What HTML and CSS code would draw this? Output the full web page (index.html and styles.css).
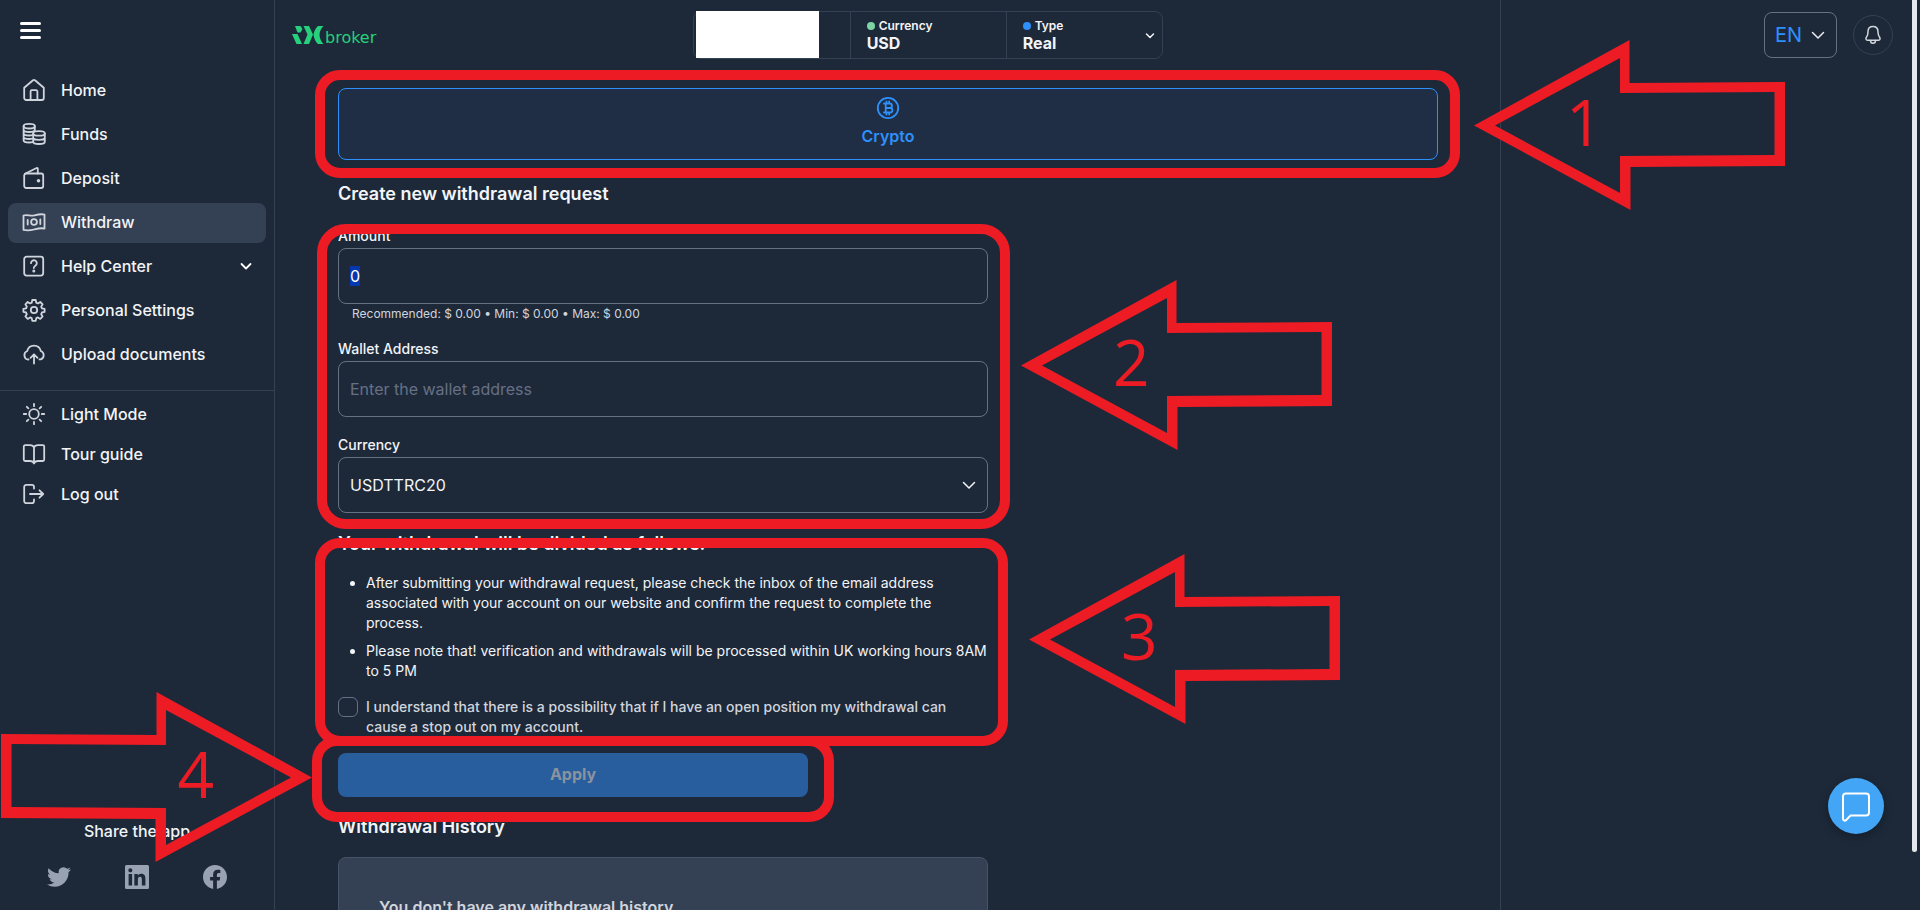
FILE: index.html
```html
<!DOCTYPE html>
<html lang="en">

<head>
    <meta charset="UTF-8">
    <meta name="viewport" content="width=device-width, initial-scale=1.0">
    <title>Withdraw</title>
    <link rel="stylesheet" href="styles.css">
</head>

<body>
    <div class="app">
        <aside class="sidebar">
            <button class="menu-toggle" type="button" aria-label="Toggle menu">
                <span></span><span></span><span></span>
            </button>

            <nav class="menu">
                <a class="menu-item" href="#">
                    <svg class="icon" viewBox="0 0 24 24"><path d="M2.2 9.8 11 2.3a1.5 1.5 0 0 1 2 0l8.8 7.5V20a2 2 0 0 1-2 2H4.2a2 2 0 0 1-2-2z"/><path d="M8.6 22v-8.6a1.2 1.2 0 0 1 1.2-1.2h4.4a1.2 1.2 0 0 1 1.2 1.2V22"/></svg>
                    Home
                </a>
                <a class="menu-item" href="#">
                    <svg class="icon" viewBox="0 0 24 24"><ellipse cx="7.2" cy="4.2" rx="5.6" ry="2.3"/><path d="M1.600 4.200v14c0 1.300 2.500 2.300 5.600 2.300 1.200 0 2.300-.1 3.200-.4M12.800 4.200v5M1.600 7.700c0 1.300 2.500 2.300 5.600 2.300s5.600-1 5.600-2.300M1.600 11.200c0 1.300 2.500 2.300 5.600 2.300 1.200 0 2.200-.1 3.200-.4M1.600 14.700c0 1.300 2.500 2.300 5.600 2.300 1.200 0 2.200-.1 3.200-.4"/><ellipse cx="17" cy="11.400" rx="5.800" ry="2.300"/><path d="M11.200 11.400v8.300c0 1.300 2.600 2.300 5.800 2.300s5.800-1 5.800-2.300v-8.300M11.200 15.500c0 1.300 2.600 2.300 5.800 2.300s5.800-1 5.800-2.300"/></svg>
                    Funds
                </a>
                <a class="menu-item" href="#">
                    <svg class="icon" viewBox="0 0 24 24"><rect x="2.200" y="7.500" width="19" height="14.500" rx="2"/><path d="M3 7.800 14.600 2a.8.800 0 0 1 1.200.7v4.800"/><circle cx="16.500" cy="14.700" r=".9" fill="currentColor"/></svg>
                    Deposit
                </a>
                <a class="menu-item active" href="#">
                    <svg class="icon" viewBox="0 0 24 24"><path d="M1.500 5.500c3.500-1.300 7 .9 10.500 0s7-1.900 10.500-.9v14c-3.500-1-7 0-10.500.9s-7 1.200-10.500.4z"/><circle cx="12" cy="12" r="2.900"/><path d="M5.700 10v4.500M18.300 9.500V14"/></svg>
                    Withdraw
                </a>
                <a class="menu-item" href="#">
                    <svg class="icon" viewBox="0 0 24 24"><rect x="2.200" y="2.600" width="19" height="19" rx="2.500"/><path d="M9 9.200a2.900 2.900 0 1 1 4.600 2.300c-1 .7-1.800 1.100-1.800 2.500"/><circle cx="11.800" cy="17" r=".6" fill="currentColor"/></svg>
                    Help Center
                    <svg class="icon icon-arrow" viewBox="0 0 16 16"><path d="m3.500 6 4.500 4.500L12.500 6"/></svg>
                </a>
                <a class="menu-item" href="#">
                    <svg class="icon" viewBox="0 0 24 24"><circle cx="12" cy="12" r="3.200"/><path d="M10.300 2h3.400l.6 2.700 1.600.7 2.400-1.500 2.300 2.400-1.400 2.300.7 1.700 2.700.6v3l-2.700.6-.7 1.700 1.400 2.300-2.300 2.400-2.400-1.500-1.600.7-.6 2.700h-3.400l-.6-2.700-1.600-.7-2.400 1.500-2.300-2.400 1.400-2.300-.7-1.700-2.700-.6v-3l2.700-.6.7-1.700-1.400-2.300 2.300-2.400 2.400 1.500 1.600-.7z"/></svg>
                    Personal Settings
                </a>
                <a class="menu-item" href="#">
                    <svg class="icon" viewBox="0 0 24 24"><path d="M6.500 17.500H5.700A4.500 4.500 0 0 1 5.200 9 7 7 0 0 1 18.800 9a4.500 4.500 0 0 1 0 8.400h-1.300"/><path d="M12 21.500v-9M8.500 15.800l3.500-3.500 3.500 3.500"/></svg>
                    Upload documents
                </a>
            </nav>

            <nav class="menu menu-secondary">
                <a class="menu-item" href="#">
                    <svg class="icon" viewBox="0 0 24 24"><circle cx="12" cy="12" r="4.800"/><path d="M12 1.800v2.400M12 19.800v2.400M1.800 12h2.400M19.800 12h2.400M4.800 4.800l1.600 1.600M17.600 17.600l1.600 1.600M4.800 19.200l1.600-1.600M17.600 6.400l1.600-1.600"/></svg>
                    Light Mode
                </a>
                <a class="menu-item" href="#">
                    <svg class="icon" viewBox="0 0 24 24"><path d="M12 5.500C11.400 3.900 10 3.200 8 3.200H3.200a1.400 1.400 0 0 0-1.400 1.400v13a1.400 1.400 0 0 0 1.400 1.400H8c2 0 3.400.6 4 2.500.600-1.900 2-2.500 4-2.500h4.800a1.400 1.400 0 0 0 1.400-1.400v-13a1.400 1.400 0 0 0-1.400-1.400H16c-2 0-3.400.7-4 2.300zM12 5.500v15"/></svg>
                    Tour guide
                </a>
                <a class="menu-item" href="#">
                    <svg class="icon" viewBox="0 0 24 24"><path d="M12 6.500V5a2.200 2.200 0 0 0-2.200-2.200H4.400A2.200 2.200 0 0 0 2.200 5v14a2.200 2.200 0 0 0 2.200 2.200h5.400A2.200 2.200 0 0 0 12 19v-1.500"/><path d="M8 12h13M17.500 8.300l3.700 3.700-3.700 3.700"/></svg>
                    Log out
                </a>
            </nav>

            <div class="share">
                <p class="share-title">Share the app</p>
                <div class="share-links">
                    <a href="#" aria-label="Twitter">
                        <svg viewBox="0 0 24 24"><path d="M23.950 4.570a10 10 0 0 1-2.820.770 4.960 4.960 0 0 0 2.160-2.720c-.950.550-2 .950-3.130 1.180a4.920 4.920 0 0 0-8.380 4.480C7.690 8.100 4.070 6.130 1.640 3.160a4.820 4.820 0 0 0-.670 2.470c0 1.710.870 3.210 2.190 4.100a4.900 4.900 0 0 1-2.230-.620v.060a4.920 4.920 0 0 0 3.950 4.830 5 5 0 0 1-2.210.080 4.940 4.940 0 0 0 4.600 3.420A9.870 9.870 0 0 1 0 19.540a14 14 0 0 0 7.550 2.210c9.050 0 14-7.500 14-13.980 0-.210 0-.420-.020-.630a9.940 9.940 0 0 0 2.460-2.550z"/></svg>
                    </a>
                    <a href="#" aria-label="LinkedIn">
                        <svg viewBox="0 0 24 24"><path fill-rule="evenodd" d="M1.500 0h21A1.500 1.500 0 0 1 24 1.500v21a1.500 1.500 0 0 1-1.500 1.500h-21A1.500 1.500 0 0 1 0 22.500v-21A1.500 1.500 0 0 1 1.500 0zM3.600 9v11.400h3.500V9zM5.350 3.300a2.050 2.050 0 1 0 0 4.100 2.050 2.050 0 0 0 0-4.100zM9.350 9v11.400h3.550v-5.650c0-1.500.3-2.930 2.120-2.930 1.810 0 1.840 1.700 1.840 3.030v5.550h3.550v-6.250c0-3.070-.660-5.430-4.250-5.430-1.720 0-2.880.950-3.350 1.850h-.060V9z"/></svg>
                    </a>
                    <a href="#" aria-label="Facebook">
                        <svg viewBox="0 0 24 24"><path d="M24 12.070C24 5.450 18.630.070 12 .070S0 5.450 0 12.070c0 5.990 4.390 10.960 10.130 11.860v-8.390H7.080v-3.470h3.050V9.430c0-3.010 1.790-4.670 4.530-4.670 1.310 0 2.690.240 2.690.240v2.950h-1.510c-1.490 0-1.960.930-1.960 1.880v2.240h3.330l-.530 3.470h-2.800v8.390C19.610 23.030 24 18.060 24 12.070z"/></svg>
                    </a>
                </div>
            </div>
        </aside>

        <main class="main">
            <header class="topbar">
                <a class="logo" href="#">
                    <svg class="logo-mark" viewBox="0 0 32 18"><path d="M3 0h5.500l2 3-2 3.500h-3zM0 8h5.500L10 18H4.500zM11.500 0H17l4 8.500-4 9.500h-5.500l4-9.500zM31.500 0H26c-2.500 2-4 5.500-4.500 8.800.5 3.700 2 7.200 4.500 9.200h5.500c-2.500-2.500-4-6-4-9.200s1.500-6.300 4-8.800z"/></svg>
                    <span>broker</span>
                </a>
                <div class="account-wrap">
                    <button class="account" type="button" aria-label="Account">
                        <span class="account-cell account-name"></span>
                        <span class="account-cell">
                            <span class="account-label"><i class="dot dot-green"></i>Currency</span>
                            <span class="account-value">USD</span>
                        </span>
                        <span class="account-cell">
                            <span class="account-label"><i class="dot dot-blue"></i>Type</span>
                            <span class="account-value">Real</span>
                            <svg class="icon account-arrow" viewBox="0 0 16 16"><path d="m4.500 6 3.500 3.500L11.500 6"/></svg>
                        </span>
                    </button>
                </div>
            </header>

            <div class="content">
                <button class="method" type="button">
                    <svg class="icon" viewBox="0 0 24 24"><circle cx="12" cy="12" r="10.200"/><path d="M8 7.500h5.700a2.200 2.200 0 0 1 0 4.500H9.700h4.500a2.250 2.250 0 0 1 0 4.500H8M9.700 7.500v9M10.500 5.500v2M13.200 5.500v2M10.500 16.500v2M13.200 16.500v2"/></svg>
                    Crypto
                </button>

                <form class="withdraw-form" id="withdraw-form">
                    <h2>Create new withdrawal request</h2>

                    <div class="field">
                        <label for="amount">Amount</label>
                        <input type="text" id="amount" name="amount" value="0">
                        <p class="field-hint">Recommended: $ 0.00 • Min: $ 0.00 • Max: $ 0.00</p>
                    </div>
                    <div class="field">
                        <label for="wallet">Wallet Address</label>
                        <input type="text" id="wallet" name="wallet" placeholder="Enter the wallet address">
                    </div>
                    <div class="field">
                        <label for="currency">Currency</label>
                        <div class="select-box">
                            <select id="currency" name="currency">
                                <option>USDTTRC20</option>
                            </select>
                            <svg class="icon" viewBox="0 0 16 16"><path d="m2.500 5.500 5.500 5.500 5.500-5.500"/></svg>
                        </div>
                    </div>

                    <h2 class="notes-title">Your withdrawal will be divided as follows:</h2>
                    <ul class="notes">
                        <li>After submitting your withdrawal request, please check the inbox of the email address associated with your account on our website and confirm the request to complete the process.</li>
                        <li>Please note that! verification and withdrawals will be processed within UK working hours 8AM to 5 PM</li>
                    </ul>

                    <div class="agree">
                        <input type="checkbox" id="agree" name="agree">
                        <label for="agree">I understand that there is a possibility that if I have an open position my withdrawal can cause a stop out on my account.</label>
                    </div>

                    <button class="apply" type="submit" disabled>Apply</button>
                </form>

                <section class="history">
                    <h2>Withdrawal History</h2>
                    <div class="history-empty">You don't have any withdrawal history</div>
                </section>
            </div>
        </main>

        <aside class="panel">
            <div class="panel-tools">
                <button class="lang" type="button">
                    EN
                    <svg class="icon" viewBox="0 0 16 16"><path d="m2.500 5.500 5.500 5.500 5.500-5.500"/></svg>
                </button>
                <button class="bell" type="button" aria-label="Notifications">
                    <svg class="icon" viewBox="0 0 20 20"><path d="M10 1.500c-3.300 0-5 2.300-5 5.200 0 2.800-.5 4-1.500 5.300-1 1.400-.7 3.200 1 3.200h11c1.700 0 2-1.800 1-3.200-1-1.300-1.500-2.500-1.500-5.300 0-2.900-1.700-5.200-5-5.200z"/><path d="M7.500 15.500c0 1.800 1 2.800 2.500 2.800s2.500-1 2.500-2.800"/></svg>
                </button>
            </div>
        </aside>

        <div class="scroll-track">
            <div class="scroll-thumb"></div>
        </div>
    </div>

    <button class="chat" type="button" aria-label="Chat">
        <svg viewBox="0 0 32 32"><path d="M6 3.500h20a3 3 0 0 1 3 3v16a3 3 0 0 1-3 3H10.500L6.200 30c-1.100 1.100-3.200.7-3.200-1.200V6.500a3 3 0 0 1 3-3z"/></svg>
    </button>

    <!-- step marks over the form -->
    <div class="mark mark-method"></div>
    <div class="mark mark-fields"></div>
    <div class="mark mark-notes"></div>
    <div class="mark mark-apply"></div>

    <div class="step step-1">
        <svg viewBox="0 0 311 170"><path fill-rule="evenodd" d="M0 85.500 155.500 0v43L311 42v84l-154.500 1v43zM21 85.500 146 153v-37l154.500-1V52L146 53V18z"/></svg>
        <span>1</span>
    </div>
    <div class="step step-2">
        <svg viewBox="0 0 311 170"><path fill-rule="evenodd" d="M0 85.500 155.500 0v43L311 42v84l-154.500 1v43zM21 85.500 146 153v-37l154.500-1V52L146 53V18z"/></svg>
        <span>2</span>
    </div>
    <div class="step step-3">
        <svg viewBox="0 0 311 170"><path fill-rule="evenodd" d="M0 85.500 155.500 0v43L311 42v84l-154.500 1v43zM21 85.500 146 153v-37l154.500-1V52L146 53V18z"/></svg>
        <span>3</span>
    </div>
    <div class="step step-4">
        <svg viewBox="0 0 311 170"><path fill-rule="evenodd" d="M311 85.500 155.500 0v43L0 42v84l154.500 1v43zM290 85.500 165 153v-37l-154.500-1V52L165 53V18z"/></svg>
        <span>4</span>
    </div>

    <script>
        document.getElementById('withdraw-form').addEventListener('submit', function (event) {
            event.preventDefault();
        });

        const amount = document.getElementById('amount');
        amount.focus();
        amount.select();
    </script>
</body>

</html>
```
FILE: styles.css
```css
* {
    box-sizing: border-box;
}

body {
    margin: 0;
    font-family: Inter, "Noto Sans", sans-serif;
    font-size: 16px;
    line-height: 24px;
    color: #f2f4f7;
    background-color: #1d2939;
    overflow: hidden;
}

a {
    color: inherit;
    text-decoration: none;
}

button,
input,
select {
    font: inherit;
    color: inherit;
}

button {
    padding: 0;
    border: none;
    background: none;
    cursor: pointer;
}

h2 {
    margin: 0;
    font-size: 18px;
    font-weight: 600;
    line-height: 28px;
}

.icon {
    width: 24px;
    height: 24px;
    fill: none;
    stroke: currentColor;
    stroke-width: 1.5;
    stroke-linecap: round;
    stroke-linejoin: round;
    flex-shrink: 0;
}

.app {
    display: flex;
    height: 100vh;
    overflow: hidden;
}

/* Sidebar */
.sidebar {
    display: flex;
    flex-direction: column;
    width: 275px;
    flex-shrink: 0;
    padding-bottom: 21px;
    border-right: 1px solid #344054;
}

.menu-toggle {
    display: flex;
    flex-direction: column;
    gap: 4px;
    width: 21px;
    margin: 22px 20px 32px;
}

.menu-toggle span {
    height: 3px;
    border-radius: 2px;
    background-color: #fff;
}

.menu {
    display: flex;
    flex-direction: column;
    gap: 4px;
    padding: 0 8px;
}

.menu-item {
    display: flex;
    align-items: center;
    gap: 15px;
    height: 40px;
    padding: 0 14px 2px;
    border-radius: 8px;
    font-weight: 500;
}

.menu-item .icon {
    color: #d0d5dd;
    stroke-width: 1.8;
}

.menu-item.active {
    background-color: #344054;
}

.menu-item .icon-arrow {
    width: 16px;
    height: 16px;
    margin-left: auto;
    margin-right: -2px;
    color: #fff;
}

.menu-secondary {
    gap: 0;
    margin-top: 15px;
    padding-top: 4px;
    border-top: 1px solid #344054;
}

.share {
    margin-top: auto;
}

.share-title {
    margin: 0 0 22px;
    text-align: center;
    font-weight: 500;
}

.share-links {
    display: flex;
    justify-content: space-between;
    padding: 0 47px;
}

.share-links a {
    height: 24px;
}

.share-links svg {
    width: 24px;
    height: 24px;
    fill: #98a2b3;
}

/* Main column */
.main {
    flex: 1;
    min-width: 0;
    border-right: 1px solid #344054;
}

.topbar {
    display: flex;
    align-items: center;
    padding: 11px 21px 0 17px;
}

.logo {
    display: flex;
    align-items: flex-end;
    gap: 1px;
    font-family: "DejaVu Sans", sans-serif;
    line-height: 12px;
    color: #26d07c;
}

.logo-mark {
    width: 32px;
    height: 18px;
    fill: #26d07c;
}

.account-wrap {
    display: flex;
    flex: 1;
    justify-content: center;
}

.account {
    display: grid;
    grid-template-columns: repeat(3, 1fr);
    width: 470px;
    height: 48px;
    border: 1px solid #344054;
    border-radius: 8px;
    text-align: left;
}

.account-cell {
    position: relative;
    display: flex;
    flex-direction: column;
    justify-content: center;
    padding-left: 16px;
}

.account-cell + .account-cell {
    border-left: 1px solid #344054;
}

.account-name {
    margin: -1px 31px 0 2px;
    background-color: #fff;
}

.account-label {
    display: flex;
    align-items: center;
    gap: 4px;
    font-size: 12px;
    font-weight: 600;
    line-height: 16px;
}

.account-value {
    font-weight: 700;
    line-height: 18px;
}

.dot {
    width: 8px;
    height: 8px;
    border-radius: 50%;
}

.dot-green {
    background-color: #7cd4a4;
}

.dot-blue {
    background-color: #2e90fa;
}

.account-arrow {
    position: absolute;
    top: 16px;
    right: 4px;
    width: 16px;
    height: 16px;
}

.content {
    padding: 29px 62px 0 63px;
}

.method {
    display: flex;
    flex-direction: column;
    align-items: center;
    justify-content: center;
    gap: 4px;
    width: 100%;
    height: 72px;
    padding-bottom: 5px;
    border: 1px solid #2e90fa;
    border-radius: 8px;
    background-color: #1f2e45;
    font-weight: 600;
    color: #2e90fa;
}

.method .icon {
    stroke-width: 1.8;
}

.withdraw-form,
.history {
    max-width: 650px;
}

.withdraw-form {
    margin-top: 20px;
}

.withdraw-form h2 {
    margin-bottom: 18px;
}

.field {
    margin-bottom: 18px;
}

.field label {
    display: block;
    margin-bottom: 2px;
    font-size: 14px;
    font-weight: 500;
    line-height: 20px;
}

.field input,
.field select {
    display: block;
    width: 100%;
    height: 56px;
    padding: 0 11px;
    border: 1px solid #667085;
    border-radius: 8px;
    outline: none;
    background-color: transparent;
    line-height: 24px;
}

.field input::placeholder {
    color: #667085;
    opacity: 1;
}

.field input::selection {
    color: #fff;
    background-color: #0437b0;
}

.field-hint {
    margin: 1px 14px -2px;
    font-size: 12px;
    line-height: 18px;
    color: #d0d5dd;
}

.select-box {
    position: relative;
}

.select-box select {
    appearance: none;
}

.select-box .icon {
    position: absolute;
    top: 20px;
    right: 11px;
    width: 16px;
    height: 16px;
    pointer-events: none;
}

.withdraw-form .notes-title {
    margin: -1px 0 15px;
}

.notes {
    display: flex;
    flex-direction: column;
    gap: 8px;
    margin: 0 0 16px;
    padding-left: 28px;
    font-size: 14px;
    line-height: 20px;
}

.agree {
    display: flex;
    align-items: flex-start;
    gap: 8px;
    font-size: 14px;
    font-weight: 500;
    line-height: 20px;
    color: #d0d5dd;
}

.agree input {
    appearance: none;
    width: 20px;
    height: 20px;
    margin: 0;
    flex-shrink: 0;
    border: 1px solid #667085;
    border-radius: 6px;
}

.apply {
    display: block;
    width: 470px;
    height: 44px;
    margin-top: 16px;
    padding-bottom: 2px;
    border-radius: 8px;
    background-color: #285d9e;
    font-weight: 700;
    color: #8a929e;
}

.history {
    margin-top: 16px;
}

.history-empty {
    margin-top: 16px;
    padding: 37px 40px;
    border: 1px solid #475467;
    border-radius: 8px;
    background-color: #344054;
    font-weight: 600;
    color: #d0d5dd;
}

/* Right panel */
.panel {
    width: 411px;
    flex-shrink: 0;
}

.panel-tools {
    display: flex;
    align-items: center;
    justify-content: flex-end;
    gap: 16px;
    padding: 12px 19px 0 0;
}

.lang {
    display: flex;
    align-items: center;
    justify-content: center;
    gap: 8px;
    width: 73px;
    height: 46px;
    border: 1px solid #667085;
    border-radius: 8px;
    font-size: 20px;
    color: #2e90fa;
}

.lang .icon {
    width: 16px;
    height: 16px;
    color: #eaecf0;
}

.bell {
    display: flex;
    align-items: center;
    justify-content: center;
    width: 40px;
    height: 40px;
    border: 1px solid #344054;
    border-radius: 50%;
}

.bell .icon {
    width: 20px;
    height: 20px;
    color: #d0d5dd;
}

.scroll-track {
    width: 8px;
    flex-shrink: 0;
}

.scroll-thumb {
    width: 5px;
    height: 852px;
    border-radius: 0 0 3px 3px;
    background-color: #e4e7ec;
}

.chat {
    position: fixed;
    right: 36px;
    bottom: 76px;
    display: flex;
    align-items: center;
    justify-content: center;
    width: 56px;
    height: 56px;
    border-radius: 50%;
    background-color: #42a5f5;
    box-shadow: 0 3px 10px rgba(0, 0, 0, 0.3);
}

.chat svg {
    width: 32px;
    height: 32px;
    fill: none;
    stroke: #fff;
    stroke-width: 2;
}

/* Step marks */
.mark {
    position: absolute;
    border: 10px solid #ed1c24;
    border-radius: 25px;
    pointer-events: none;
}

.mark-method {
    left: 315px;
    top: 70px;
    width: 1145px;
    height: 108px;
}

.mark-fields {
    left: 317px;
    top: 224px;
    width: 693px;
    height: 305px;
    border-radius: 29px;
}

.mark-notes {
    left: 315px;
    top: 538px;
    width: 693px;
    height: 208px;
}

.mark-apply {
    left: 312px;
    top: 736px;
    width: 522px;
    height: 86px;
}

.step {
    position: absolute;
    width: 311px;
    height: 170px;
    font-family: "Open Sans", "Noto Sans", sans-serif;
    font-size: 64px;
    line-height: 164px;
    color: #ed1c24;
    pointer-events: none;
}

.step svg {
    position: absolute;
    top: 0;
    left: 0;
    width: 311px;
    height: 170px;
    fill: #ed1c24;
}

.step span {
    display: block;
    padding: 0 98px 0 92px;
}

.step-1 {
    left: 1474px;
    top: 40px;
}

.step-2 {
    left: 1021px;
    top: 280px;
}

.step-3 {
    left: 1029px;
    top: 554px;
}

.step-4 {
    left: 1px;
    top: 692px;
    text-align: right;
}
```
